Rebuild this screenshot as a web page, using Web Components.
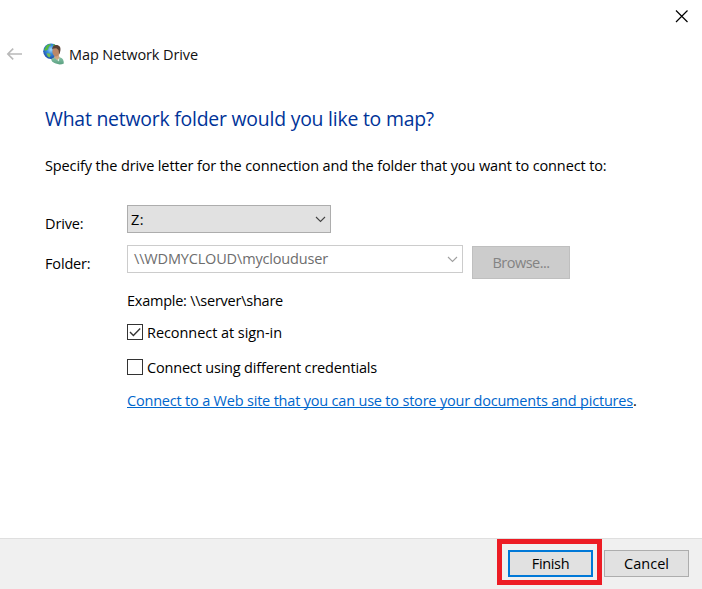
<!DOCTYPE html>
<html lang="en">
<head>
<meta charset="utf-8">
<title>Map Network Drive</title>
<style>
    body {
        margin: 0;
        height: 589px;
        overflow: hidden;
        background: #fff;
        color: #000;
        font: 14.5px/20px "Segoe UI", "Open Sans", "Noto Sans", sans-serif;
    }
</style>
</head>
<body>
<wizard-window></wizard-window>

<script>
// A single line of text, tracked so that it fills the given width
class FitText extends HTMLElement {
    constructor() {
        super();
        this.attachShadow({mode: 'open'});
        this.shadowRoot.innerHTML = `
        <style>
            :host {
                display: inline-block;
                white-space: nowrap;
            }
            span {
                display: inline-block;
            }
        </style>
        <span><slot></slot></span>
        `;
    }

    connectedCallback() {
        let target = Number(this.getAttribute('width'));
        let span = this.shadowRoot.querySelector('span');
        let nodes = this.shadowRoot.querySelector('slot').assignedNodes({flatten: true});
        let count = nodes.map(node => node.textContent).join('').trim().length;
        let natural = span.getBoundingClientRect().width;

        if (target && count) {
            span.style.letterSpacing = ((target - natural) / count) + 'px';
        }
    }
}

class DialogHeader extends HTMLElement {
    constructor() {
        super();
        this.attachShadow({mode: 'open'});
        this.shadowRoot.innerHTML = `
        <style>
            :host {
                display: block;
            }
            svg {
                display: block;
            }
            .close {
                display: flex;
                justify-content: flex-end;
                padding: 10px 14px 0 0;
                height: 34px;
                box-sizing: border-box;
            }
            .title {
                display: flex;
                align-items: center;
                height: 22px;
                padding: 9px 0 0 6px;
            }
            .globe {
                margin: 0 4px 0 20px;
            }
            .name {
                margin-top: 2px;
                color: #111;
            }
        </style>
        <div class="close">
            <svg width="13" height="13" viewBox="0 0 13 13" fill="none" stroke="#000" stroke-width="1.2">
                <path d="M1 .5 12.5 12M12.5.5 1 12"/>
            </svg>
        </div>
        <div class="title">
            <svg width="17" height="14" viewBox="0 0 17 14" fill="none" stroke="#b9b9b9" stroke-width="1.6">
                <path d="M16 7H2M7.2 1.6 1.8 7l5.4 5.4"/>
            </svg>
            <svg class="globe" width="22" height="22" viewBox="0 0 22 22">
                <defs>
                    <radialGradient id="sea" cx=".5" cy=".4" r=".65">
                        <stop offset="0" stop-color="#a5dcfb"/>
                        <stop offset=".4" stop-color="#3b8ee0"/>
                        <stop offset="1" stop-color="#16439f"/>
                    </radialGradient>
                    <linearGradient id="coat" x2="0" y2="1">
                        <stop offset="0" stop-color="#8fc7ad"/>
                        <stop offset="1" stop-color="#59a080"/>
                    </linearGradient>
                </defs>
                <circle cx="8" cy="8.2" r="7.8" fill="url(#sea)"/>
                <path d="M4 2 7.2.9 8 2.2 6 3.6 5 6.4 2.2 8 1.2 6.4zM10.5 1l2.4 1.2-1 1.7-1.9-.6z" fill="#58b83e"/>
                <path d="M3.4 10.6l2.8-.4 1.6 1.7-1.2 2.6-1.9-1z" fill="#73be50"/>
                <path d="M9.4 15.4l3-2.2 5 1.3c2.4.8 3.4 2.8 3.4 6-3.2 1.5-8 1.2-11.6-1.9L8 16.6z" fill="url(#coat)"/>
                <path d="M11.6 11.5h4.2l.7 3-2 2.8-3.2-2.5z" fill="#d0a684"/>
                <path d="M13.2 15.4l1.3 2 1.8-2.6-.3 3.8z" fill="#e9f4ee"/>
                <ellipse cx="13" cy="8.6" rx="3.6" ry="4.9" fill="#bb8767"/>
                <path d="M9.2 6.4C9 3.6 10.8 2 13.3 2c3.1 0 4.7 2.4 4.1 5.4l-1 4.3-.9-4.6-2.2-1.8-2.7.3z" fill="#594136"/>
            </svg>
            <fit-text class="name" width="129"><slot></slot></fit-text>
        </div>
        `;
    }
}

class ComboBox extends HTMLElement {
    constructor() {
        super();
        this.attachShadow({mode: 'open'});
        this.shadowRoot.innerHTML = `
        <style>
            :host {
                display: flex;
                justify-content: space-between;
                box-sizing: border-box;
                width: 204px;
                height: 28px;
                padding: 4px 4px 0 3px;
                border: 1px solid #adadad;
                background: #e1e1e1;
                color: #000;
            }
            :host([disabled]) {
                width: 336px;
                padding: 3px 4px 0 6px;
                border-color: #ccc;
                background: #fff;
                color: #6d6d6d;
            }
            svg {
                margin-top: 6px;
                stroke: #444;
            }
            :host([disabled]) svg {
                margin-top: 7px;
                stroke: #a0a0a0;
            }
        </style>
        <slot></slot>
        <svg width="11" height="7" viewBox="0 0 11 7" fill="none" stroke-width="1.1">
            <path d="M1 1l4.5 4.5L10 1"/>
        </svg>
        `;
    }
}

class PushButton extends HTMLElement {
    constructor() {
        super();
        this.attachShadow({mode: 'open'});
        this.shadowRoot.innerHTML = `
        <style>
            :host {
                display: flex;
                align-items: center;
                justify-content: center;
                position: relative;
                box-sizing: border-box;
                width: 85px;
                height: 27px;
                border: 1px solid #adadad;
                background: #e1e1e1;
            }
            :host([default]) {
                border: 2px solid #0078d7;
            }
            :host([disabled]) {
                width: 98px;
                height: 33px;
                border-color: #bfbfbf;
                background: #ccc;
                color: #838383;
            }
            .marker {
                display: none;
                position: absolute;
                top: -13px; right: -11px;
                bottom: -10px; left: -13px;
                border: 5px solid #ed1c24;
            }
            :host([marked]) .marker {
                display: block;
            }
        </style>
        <slot></slot>
        <div class="marker"></div>
        `;
    }
}

class CheckBox extends HTMLElement {
    constructor() {
        super();
        this.attachShadow({mode: 'open'});
        this.shadowRoot.innerHTML = `
        <style>
            :host {
                display: flex;
                gap: 4px;
                height: 20px;
            }
            .box {
                box-sizing: border-box;
                width: 16px;
                height: 16px;
                margin-top: 1px;
                border: 1px solid #333;
                background: #fff;
            }
            svg {
                display: none;
            }
            :host([checked]) svg {
                display: block;
            }
        </style>
        <div class="box">
            <svg width="14" height="14" viewBox="0 0 14 14" fill="none" stroke="#333" stroke-width="1.4">
                <path d="M2 7l3.4 3.4L12.2 3.6"/>
            </svg>
        </div>
        <slot></slot>
        `;
    }
}

class WizardWindow extends HTMLElement {
    constructor() {
        super();
        this.attachShadow({mode: 'open'});
        this.shadowRoot.innerHTML = `
        <style>
            :host {
                display: flex;
                flex-direction: column;
                height: 100%;
            }
            main {
                flex: 1;
                padding: 40px 45px 0;
            }
            h1 {
                display: flex;
                margin: 0;
                color: #003399;
                font-size: 19.4px;
                font-weight: normal;
                line-height: 28px;
            }
            .intro {
                display: flex;
                margin-top: 23px;
            }
            .form {
                display: grid;
                grid-template-columns: 82px auto;
                align-items: start;
                row-gap: 12px;
                margin-top: 29px;
            }
            .label {
                display: flex;
                padding-top: 9px;
                height: 19px;
            }
            .folder {
                display: flex;
                gap: 9px;
                height: 28px;
            }
            .folder push-button {
                margin-top: 1px;
            }
            .options {
                display: flex;
                flex-direction: column;
                padding: 18px 0 0 82px;
            }
            check-box.first {
                margin: 12px 0 15px;
            }
            .link {
                margin-top: 13px;
                display: flex;
                white-space: nowrap;
            }
            a {
                height: 16px;
                border-bottom: 1px solid #0066cc;
                color: #0066cc;
                text-decoration: none;
            }
            footer {
                display: flex;
                justify-content: flex-end;
                gap: 11px;
                box-sizing: border-box;
                height: 51px;
                padding: 11px 13px 0 0;
                border-top: 1px solid #dfdfdf;
                background: #f0f0f0;
            }
        </style>
        <dialog-header>Map Network Drive</dialog-header>
        <main>
            <h1><fit-text width="389">What network folder would you like to map?</fit-text></h1>
            <div class="intro"><fit-text width="561.5">Specify the drive letter for the connection and the folder that you want to connect to:</fit-text></div>
            <div class="form">
                <div class="label"><fit-text width="38.5">Drive:</fit-text></div>
                <combo-box><fit-text width="13">Z:</fit-text></combo-box>
                <div class="label"><fit-text width="45.5">Folder:</fit-text></div>
                <div class="folder">
                    <combo-box disabled><fit-text width="194">\\\\WDMYCLOUD\\myclouduser</fit-text></combo-box>
                    <push-button disabled><fit-text width="57">Browse...</fit-text></push-button>
                </div>
            </div>
            <div class="options">
                <fit-text width="156">Example: \\\\server\\share</fit-text>
                <check-box class="first" checked><fit-text width="135">Reconnect at sign-in</fit-text></check-box>
                <check-box><fit-text width="230">Connect using different credentials</fit-text></check-box>
                <div class="link"><a href="#"><fit-text width="506">Connect to a Web site that you can use to store your documents and pictures</fit-text></a>.</div>
            </div>
        </main>
        <footer>
            <push-button default marked><fit-text width="37.5">Finish</fit-text></push-button>
            <push-button><fit-text width="45">Cancel</fit-text></push-button>
        </footer>
        `;
    }
}

window.customElements.define('fit-text', FitText);
window.customElements.define('dialog-header', DialogHeader);
window.customElements.define('combo-box', ComboBox);
window.customElements.define('push-button', PushButton);
window.customElements.define('check-box', CheckBox);
window.customElements.define('wizard-window', WizardWindow);
</script>
</body>
</html>
